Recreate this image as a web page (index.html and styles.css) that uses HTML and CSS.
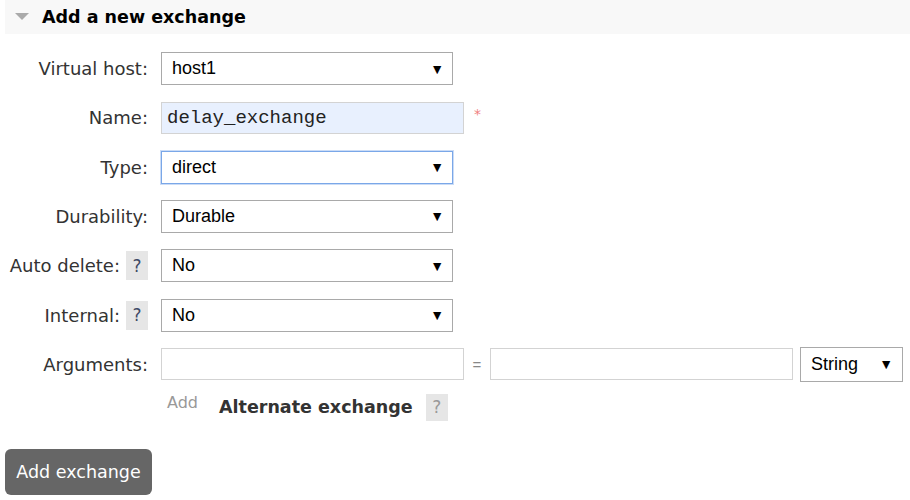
FILE: index.html
```html
<!DOCTYPE html>
<html>
<head>
<meta charset="utf-8">
<link rel="stylesheet" href="styles.css">
</head>
<body>
<div class="section">
  <div class="section-head">
    <svg class="tri" width="14" height="8" viewBox="0 0 14 8"><path d="M0 0 L14 0 L7 7 Z" fill="#aaa"/></svg>
    <h2>Add a new exchange</h2>
  </div>
  <div class="form">
    <div class="row">
      <div class="label">Virtual host:</div>
      <div class="select sel-main"><span>host1</span><span class="arrow">▼</span></div>
    </div>
    <div class="row">
      <div class="label">Name:</div>
      <div class="input name">delay_exchange</div>
      <span class="req">*</span>
    </div>
    <div class="row">
      <div class="label">Type:</div>
      <div class="select sel-main focus"><span>direct</span><span class="arrow">▼</span></div>
    </div>
    <div class="row">
      <div class="label">Durability:</div>
      <div class="select sel-main"><span>Durable</span><span class="arrow">▼</span></div>
    </div>
    <div class="row">
      <div class="label">Auto delete: <span class="help">?</span></div>
      <div class="select sel-main"><span>No</span><span class="arrow">▼</span></div>
    </div>
    <div class="row">
      <div class="label">Internal: <span class="help">?</span></div>
      <div class="select sel-main"><span>No</span><span class="arrow">▼</span></div>
    </div>
    <div class="row">
      <div class="label">Arguments:</div>
      <div class="input arg arg-first"></div>
      <span class="eq">=</span>
      <div class="input arg"></div>
      <div class="select sel-type"><span>String</span><span class="arrow">▼</span></div>
    </div>
    <div class="row-add">
      <span class="add">Add</span>
      <span class="alt">Alternate exchange</span>
      <span class="help help-alt">?</span>
    </div>
  </div>
  <button class="btn">Add exchange</button>
</div>
</body>
</html>
```
FILE: styles.css
```css
html, body { margin: 0; padding: 0; background: #fff; }
body { font-family: "DejaVu Sans", Verdana, sans-serif; color: #484848; }
.section { padding-left: 5px; }
.section-head {
  display: flex; align-items: center; height: 34px; background: #f8f8f8;
}
.tri { margin-left: 10px; margin-right: 13px; }
h2 { margin: 0; font-size: 17.5px; font-weight: bold; color: #000; font-family: "DejaVu Sans", sans-serif; }
.form { padding-top: 18px; }
.row { display: flex; align-items: center; height: 33px; margin-bottom: 16.33px; }
.label {
  width: 143px; text-align: right; font-size: 18px; color: #333; white-space: nowrap;
  display: flex; justify-content: flex-end; align-items: center; gap: 6px;
}
.help {
  display: inline-flex; align-items: center; justify-content: center;
  width: 22px; height: 29px; background: #e6e6e6; color: #3e4a66; font-size: 17px;
}
.select {
  box-sizing: border-box; height: 33px; border: 1px solid #a9a9a9; background: #fff;
  display: flex; align-items: center; justify-content: space-between;
  padding: 0 8px 0 10px; font-family: "Liberation Sans", Arial, sans-serif; font-size: 18px; color: #000;
}
.sel-main { width: 292px; margin-left: 13px; }
.focus { border: 1px solid #7aa7e8; box-shadow: 0 0 0 1px #cbdcf6; }
.arrow { font-size: 14px; color: #000; }
.input {
  box-sizing: border-box; height: 32px; border: 1px solid #d3d3d3; background: #fff;
}
.name {
  width: 303px; margin-left: 13px; background: #e8f0fe; font-family: "Liberation Mono", "Courier New", monospace;
  font-size: 19px; color: #222; display: flex; align-items: center; padding-left: 5px;
}
.req { color: #f08080; font-size: 14px; margin-left: 10px; margin-top: -8px; }
.arg { width: 303px; }
.arg-first { margin-left: 13px; }
.eq { width: 26px; text-align: center; color: #888; font-size: 15px; font-family: "Liberation Sans", Arial, sans-serif; }
.sel-type { width: 103px; height: 35px; margin-left: 7px; padding: 0 9px 0 10px; font-size: 18px; }
.row-add { display: flex; align-items: center; margin-left: 162px; height: 30px; margin-top: -5px; }
.add { color: #999; font-size: 16px; margin-top: -10px; }
.alt { font-weight: bold; color: #333; font-size: 17.5px; margin-left: 21px; font-family: "DejaVu Sans", sans-serif; }
.help-alt { margin-left: 13px; width: 22px; height: 27px; color: #999; }
.btn {
  display: block; margin-top: 27px; width: 147px; height: 46px; border: none; border-radius: 6px;
  background: #666; color: #fff; font-size: 17.5px; font-family: "DejaVu Sans", sans-serif;
  padding: 0;
}
```
